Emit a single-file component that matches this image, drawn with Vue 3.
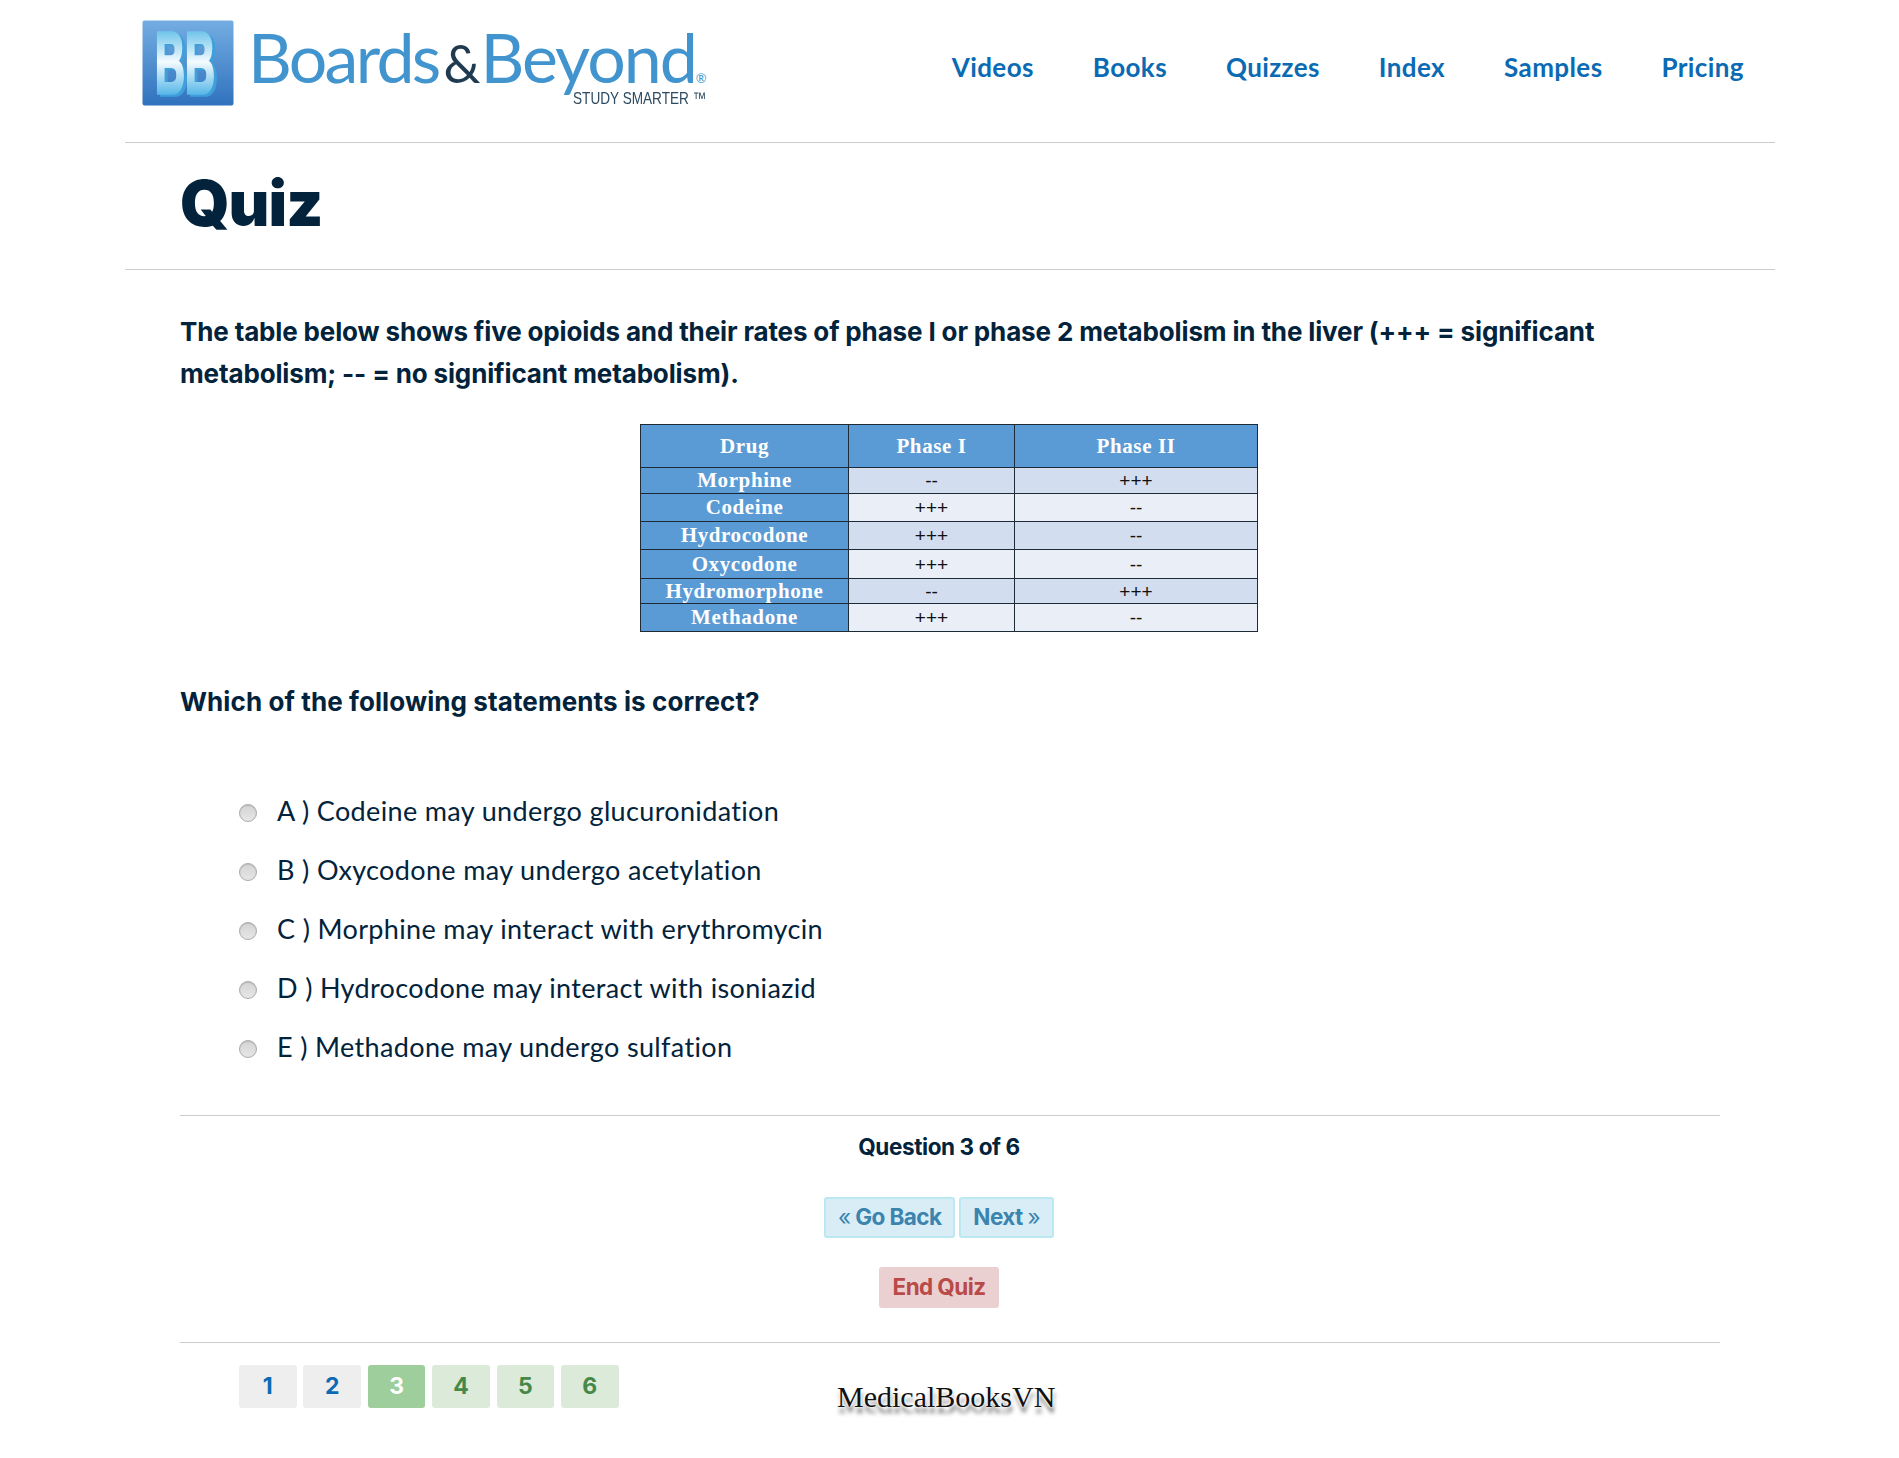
<template>
  <div class="page">
    <header class="site-header">
      <a class="logo">
        <svg class="logo-mark" width="92" height="86" viewBox="0 0 92 86" overflow="visible">
          <defs>
            <linearGradient id="tile" x1="0" y1="0" x2="0" y2="1">
              <stop offset="0" stop-color="#74ade2" />
              <stop offset="1" stop-color="#2f72bd" />
            </linearGradient>
            <linearGradient id="face" gradientUnits="userSpaceOnUse" x1="0" y1="8" x2="0" y2="76">
              <stop offset="0" stop-color="#62bfe8" />
              <stop offset="0.5" stop-color="#f4fbfe" />
              <stop offset="1" stop-color="#4fb4e6" />
            </linearGradient>
          </defs>
          <rect x="0.5" y="0.5" width="91" height="85" rx="2" fill="url(#tile)" />
          <text x="13" y="73" class="logo-bb" textLength="60" lengthAdjust="spacingAndGlyphs" fill="url(#face)" stroke="url(#face)" stroke-width="3.5">BB</text>
        </svg>
        <div class="logo-words">
          <div class="logo-name">Boards<span class="amp">&amp;</span><span class="beyond">Beyond</span><span class="reg">®</span></div>
          <div class="logo-tag">STUDY SMARTER ™</div>
        </div>
      </a>
      <nav class="nav">
        <a v-for="item in navItems" :key="item">{{ item }}</a>
      </nav>
    </header>

    <div class="title-row">
      <h1>Quiz</h1>
    </div>

    <main class="content">
      <p class="stem">
        The table below shows five opioids and their rates of phase I or phase 2 metabolism in the liver (+++ = significant metabolism; -- = no significant metabolism).
      </p>

      <table class="drugs">
        <thead>
          <tr>
            <th class="c-drug">Drug</th>
            <th class="c-one">Phase I</th>
            <th class="c-two">Phase II</th>
          </tr>
        </thead>
        <tbody>
          <tr v-for="row in rows" :key="row.name" :style="{ height: row.h + 'px' }">
            <th>{{ row.name }}</th>
            <td>{{ row.one }}</td>
            <td>{{ row.two }}</td>
          </tr>
        </tbody>
      </table>

      <p class="ask">Which of the following statements is correct?</p>

      <ul class="answers">
        <li v-for="a in answers" :key="a">
          <span class="radio"></span>
          <span>{{ a }}</span>
        </li>
      </ul>

      <div class="controls">
        <div class="progress">Question 3 of 6</div>
        <div class="btn-row">
          <a class="btn btn-info"><span class="quote">«</span> Go Back</a>
          <a class="btn btn-info">Next <span class="quote">»</span></a>
        </div>
        <div class="btn-row end-row">
          <a class="btn btn-end">End Quiz</a>
        </div>
      </div>

      <div class="pager">
        <a
          v-for="p in pages"
          :key="p.n"
          class="page-btn"
          :class="p.cls"
        >{{ p.n }}</a>
        <div class="watermark">MedicalBooksVN</div>
      </div>
    </main>
  </div>
</template>

<script setup>
const navItems = ['Videos', 'Books', 'Quizzes', 'Index', 'Samples', 'Pricing']

const rows = [
  { name: 'Morphine', one: '--', two: '+++', h: 26 },
  { name: 'Codeine', one: '+++', two: '--', h: 28 },
  { name: 'Hydrocodone', one: '+++', two: '--', h: 28 },
  { name: 'Oxycodone', one: '+++', two: '--', h: 29 },
  { name: 'Hydromorphone', one: '--', two: '+++', h: 25 },
  { name: 'Methadone', one: '+++', two: '--', h: 28 }
]

const answers = [
  'A ) Codeine may undergo glucuronidation',
  'B ) Oxycodone may undergo acetylation',
  'C ) Morphine may interact with erythromycin',
  'D ) Hydrocodone may interact with isoniazid',
  'E ) Methadone may undergo sulfation'
]

const pages = [
  { n: 1, cls: 'seen' },
  { n: 2, cls: 'seen' },
  { n: 3, cls: 'current' },
  { n: 4, cls: 'todo' },
  { n: 5, cls: 'todo' },
  { n: 6, cls: 'todo' }
]
</script>

<style>
html, body {
  margin: 0;
  background: #fff;
}
</style>

<style scoped>
.page {
  width: 1650px;
  height: 1458px;
  margin-left: 125px;
  overflow: hidden;
  color: #02233b;
  font-family: Lato, sans-serif;
}
.site-header {
  height: 142px;
  border-bottom: 1px solid #ccc;
  display: flex;
  justify-content: space-between;
}
.logo {
  display: flex;
  padding: 20px 0 0 17px;
}
.logo-mark {
  display: block;
}
.logo-bb {
  font-family: "Liberation Sans", sans-serif;
  font-weight: 700;
  font-size: 88px;
  filter: drop-shadow(3px 2px 0 #3f9fda);
}
.logo-words {
  margin-left: 14px;
  width: 480px;
}
.logo-name {
  font-family: Lato, sans-serif;
  font-weight: 400;
  font-size: 68px;
  line-height: 64px;
  letter-spacing: -2.7px;
  color: #4194cd;
  margin-top: 5px;
  white-space: nowrap;
}
.amp {
  color: #1f3b52;
  font-size: 52px;
  letter-spacing: -1px;
  margin: 0 1px 0 5px;
}
.beyond {
  letter-spacing: -2px;
}
.reg {
  font-size: 13px;
  letter-spacing: 0;
}
.logo-tag {
  font-family: "Liberation Sans", sans-serif;
  font-size: 17px;
  line-height: 18px;
  color: #2c4a60;
  margin: -20px 0 0 325px;
  width: fit-content;
  white-space: nowrap;
  transform: scaleX(0.8);
  transform-origin: left center;
}
.nav {
  display: flex;
  gap: 59px;
  padding: 52px 31px 0 0;
  font-family: Lato, sans-serif;
  font-weight: 700;
  font-size: 26px;
  line-height: 30px;
  letter-spacing: 0.4px;
  color: #0a6ab3;
}
.title-row {
  height: 126px;
  border-bottom: 1px solid #ccc;
  padding-left: 55px;
}
h1 {
  margin: 0;
  padding-top: 24px;
  font-family: Inter, sans-serif;
  font-weight: 900;
  font-size: 63px;
  line-height: 72px;
  letter-spacing: -1px;
  color: #02233b;
}
.content {
  padding: 0 55px;
}
.stem {
  margin: 41px 0 0;
  width: 1500px;
  font-family: Inter, sans-serif;
  font-weight: 700;
  font-size: 26px;
  line-height: 41.5px;
  letter-spacing: -0.14px;
}
.drugs {
  margin: 30px 0 0 460px;
  border-collapse: collapse;
  table-layout: fixed;
  width: 614px;
  font-size: 19px;
  font-family: "Liberation Sans", sans-serif;
  color: #111;
}
.drugs th, .drugs td {
  border: 1.5px solid #1e2a36;
  padding: 0;
  text-align: center;
  line-height: 1;
}
.drugs th {
  background: #5b9bd5;
  color: #fff;
  font-weight: 700;
  font-family: "Liberation Serif", serif;
  font-size: 21px;
  letter-spacing: 0.6px;
}
.drugs thead tr {
  height: 43px;
}
.c-drug { width: 207px; }
.c-one { width: 165px; }
.c-two { width: 242px; }
.drugs tbody tr:nth-child(odd) td {
  background: #d2deef;
}
.drugs tbody tr:nth-child(even) td {
  background: #eaeff7;
}
.ask {
  margin: 52px 0 0;
  font-family: Inter, sans-serif;
  font-weight: 700;
  font-size: 26px;
  line-height: 36px;
  letter-spacing: 0.1px;
}
.answers {
  list-style: none;
  margin: 61px 0 0;
  padding: 0 0 0 59px;
  font-size: 27px;
  line-height: 59px;
  letter-spacing: 0.35px;
}
.answers li {
  display: flex;
  align-items: center;
  gap: 20px;
  height: 59px;
}
.radio {
  width: 18px;
  height: 18px;
  box-sizing: border-box;
  border-radius: 50%;
  border: 1px solid #aaa;
  background: linear-gradient(#d4d4d4, #e6e6e6);
  box-shadow: inset 0 1px 1px rgba(0, 0, 0, 0.12);
  margin-top: 5px;
}
.controls {
  margin-top: 39px;
  height: 228px;
  padding-right: 22px;
  box-sizing: border-box;
  border-top: 1px solid #ccc;
  border-bottom: 1px solid #ccc;
  text-align: center;
}
.progress {
  margin-top: 16px;
  font-family: Inter, sans-serif;
  font-weight: 700;
  font-size: 22.5px;
  line-height: 30px;
  letter-spacing: -0.4px;
}
.btn-row {
  display: flex;
  justify-content: center;
  gap: 4px;
  margin-top: 35px;
}
.end-row {
  margin-top: 29px;
}
.btn {
  display: block;
  box-sizing: border-box;
  height: 41px;
  padding: 0 12px;
  border: 2px solid transparent;
  border-radius: 3px;
  font-family: Inter, sans-serif;
  font-weight: 700;
  font-size: 22.5px;
  line-height: 36px;
  letter-spacing: -0.6px;
}
.quote {
  font-weight: 400;
}
.btn-info {
  background: #d9edf7;
  border-color: #bce8f1;
  color: #3a84ad;
}
.btn-end {
  background: #ebd0d2;
  border-color: #ebd0d2;
  color: #b94a48;
}
.pager {
  position: relative;
  display: flex;
  gap: 6.8px;
  padding: 22px 0 0 59px;
}
.page-btn {
  display: block;
  width: 57.6px;
  height: 43px;
  border-radius: 3px;
  text-align: center;
  font-family: Inter, sans-serif;
  font-weight: 700;
  font-size: 23px;
  line-height: 43px;
}
.seen {
  background: #eee;
  color: #0a6ab3;
}
.current {
  background: #9dce9b;
  color: #fff;
}
.todo {
  background: #dceada;
  color: #468847;
}
.watermark {
  position: absolute;
  left: 657px;
  top: 36px;
  font-family: "Liberation Serif", serif;
  font-size: 30px;
  line-height: 36px;
  color: #111;
  white-space: nowrap;
  text-shadow: 0 0 2px #fff, 0 0 3px #fff, 0 0 4px #fff, 1px 6px 4px rgba(0, 0, 0, 0.6);
}
</style>
